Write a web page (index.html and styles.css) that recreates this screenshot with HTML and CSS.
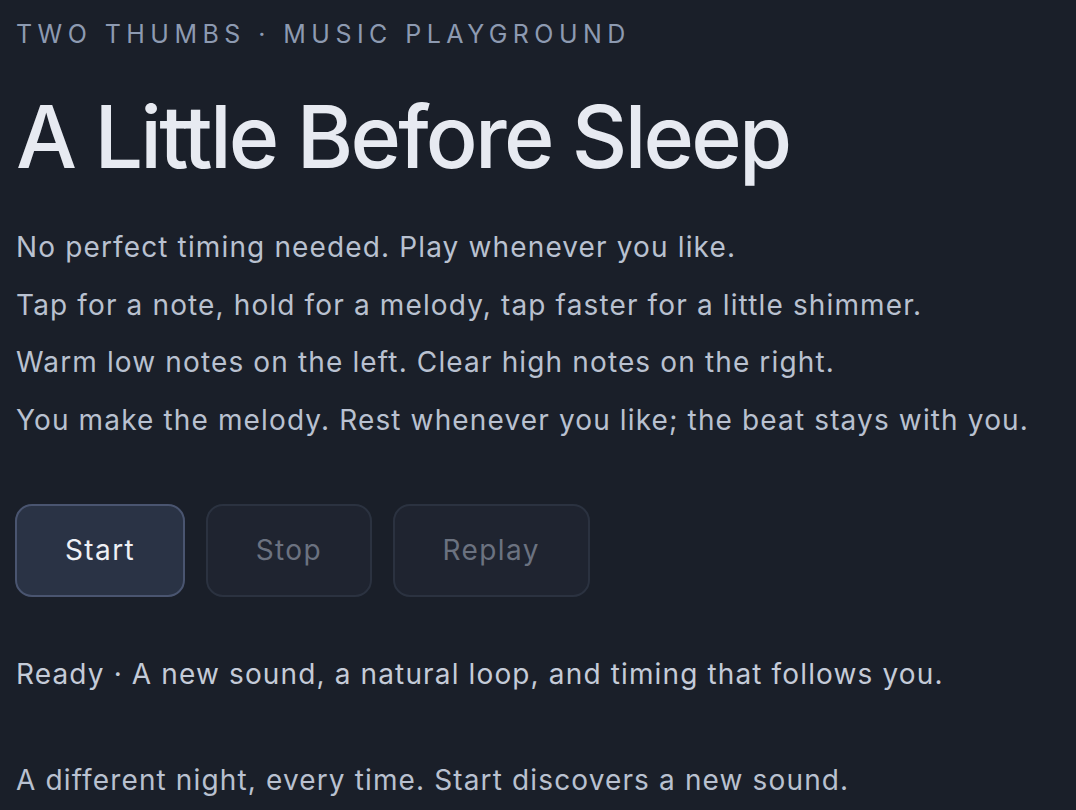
FILE: index.html
```html
<!DOCTYPE html>
<html lang="en">
<head>
  <meta charset="UTF-8">
  <meta name="viewport" content="width=device-width, initial-scale=1.0">
  <title>A Little Before Sleep</title>
  <link rel="stylesheet" href="styles.css">
</head>
<body>
  <main class="page">
    <div class="kicker">Two Thumbs · Music Playground</div>
    <h1>A Little Before Sleep</h1>

    <div class="intro">
      <p>No perfect timing needed. Play whenever you like.</p>
      <p>Tap for a note, hold for a melody, tap faster for a little shimmer.</p>
      <p>Warm low notes on the left. Clear high notes on the right.</p>
      <p>You make the melody. Rest whenever you like; the beat stays with you.</p>
    </div>

    <div class="controls">
      <button class="btn btn-primary" id="start">Start</button>
      <button class="btn" id="stop" disabled>Stop</button>
      <button class="btn" id="replay" disabled>Replay</button>
    </div>

    <p class="status" id="status">Ready · A new sound, a natural loop, and timing that follows you.</p>
    <p class="note">A different night, every time. Start discovers a new sound.</p>
  </main>
</body>
</html>
```

FILE: styles.css
```css
body {
  font-family: Inter, "Noto Sans", sans-serif;
  margin: 0;
  background: #1a1f29;
  color: #b9c1d0;
  letter-spacing: 0.071em;
}

.page {
  padding: 16px 16px 0;
}

.kicker {
  font-size: 25px;
  line-height: 36px;
  letter-spacing: 0.218em;
  text-transform: uppercase;
  color: #8d9ab1;
}

h1 {
  margin: 42px 0 0;
  font-size: 86px;
  font-weight: 500;
  line-height: 1;
  letter-spacing: -0.032em;
  color: #e7eaf1;
}

.intro {
  display: flex;
  flex-direction: column;
  gap: 15.5px;
  margin-top: 46px;
}

.intro p {
  margin: 0;
  font-size: 28px;
  line-height: 42px;
}

.controls {
  display: flex;
  gap: 20.5px;
  margin: 63px 0 0 -1px;
}

.btn {
  height: 93px;
  padding: 0 48px;
  border: 2px solid #2b3240;
  border-radius: 17px;
  background: #1f2430;
  color: #6b7280;
  font-family: inherit;
  font-size: 28px;
  letter-spacing: 0.05em;
}

.btn-primary {
  background: #2a3345;
  border-color: #4a5570;
  color: #eef0f5;
  cursor: pointer;
}

.status {
  margin: 57px 0 0;
  font-size: 28px;
  line-height: 40px;
  color: #c4cbd8;
}

.note {
  margin: 66px 0 0;
  font-size: 28px;
  line-height: 40px;
}
```
